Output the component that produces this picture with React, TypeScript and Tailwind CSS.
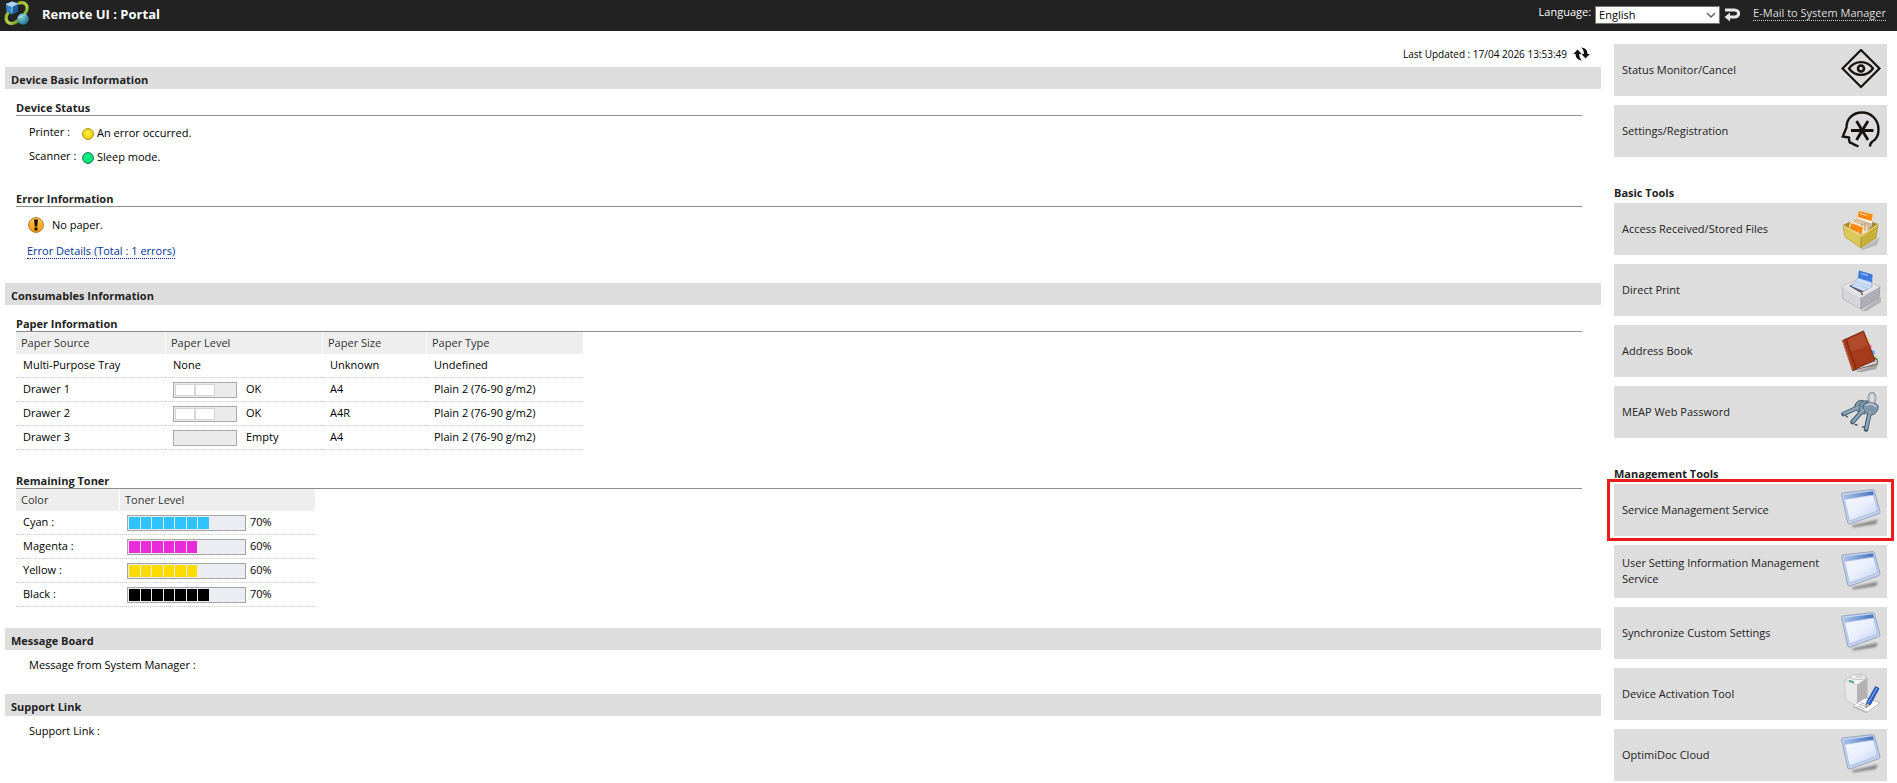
import React from 'react';

interface PaperRow {
    source: string;
    level: string;
    filled?: number;
    size: string;
    type: string;
}

interface TonerRow {
    name: string;
    percent: number;
    color: string;
}

const paperRows: PaperRow[] = [
    { source: 'Multi-Purpose Tray', level: 'None', size: 'Unknown', type: 'Undefined' },
    { source: 'Drawer 1', level: 'OK', filled: 2, size: 'A4', type: 'Plain 2 (76-90 g/m2)' },
    { source: 'Drawer 2', level: 'OK', filled: 2, size: 'A4R', type: 'Plain 2 (76-90 g/m2)' },
    { source: 'Drawer 3', level: 'Empty', filled: 0, size: 'A4', type: 'Plain 2 (76-90 g/m2)' },
];

const tonerRows: TonerRow[] = [
    { name: 'Cyan', percent: 70, color: 'bg-[#2cc3ff]' },
    { name: 'Magenta', percent: 60, color: 'bg-[#ea2ad8]' },
    { name: 'Yellow', percent: 60, color: 'bg-[#ffdc00]' },
    { name: 'Black', percent: 70, color: 'bg-black' },
];

const LogoIcon = () => (
    <svg viewBox="0 0 26 26" className="h-[26px] w-[26px]" aria-hidden="true">
        <defs>
            <linearGradient id="logoRing" x1="0" y1="0" x2="1" y2="1">
                <stop offset="0" stopColor="#8fb52a" />
                <stop offset="0.6" stopColor="#b9d243" />
                <stop offset="1" stopColor="#5f8f2c" />
            </linearGradient>
            <radialGradient id="logoBall" cx="0.35" cy="0.3" r="0.8">
                <stop offset="0" stopColor="#8fd0d8" />
                <stop offset="1" stopColor="#0f6f8c" />
            </radialGradient>
        </defs>
        <path d="M14 3.500c6-2.500 10 1 9 6-.6 3-2.500 4.500-3.500 6" fill="none" stroke="url(#logoRing)" strokeWidth="3.200" />
        <path d="M4.500 12c-3 4-3.500 9 .5 11 4 1.500 7-.5 9-2.500" fill="none" stroke="url(#logoRing)" strokeWidth="3.200" />
        <path d="M2 4l6-2.500 6 2-.3 8L8 14.500l-5.500-3z" fill="#2f86c4" />
        <path d="M2 4l6-2.500 6 2L8 6.500z" fill="#a9d6ef" />
        <path d="M8 6.500l6-3-.3 8L8 14.500z" fill="#1a5d97" />
        <path d="M2 4l6 2.500v6M8 6.500l6-3" fill="none" stroke="#d8effa" strokeWidth="0.8" />
        <circle cx="19" cy="19" r="5.800" fill="url(#logoBall)" />
        <path d="M14 18c3-1 6-3 8-3.500" fill="none" stroke="#b7e3e0" strokeWidth="1" />
    </svg>
);

const ReturnIcon = () => (
    <svg viewBox="0 0 17 15" className="h-[15px] w-[17px]" aria-hidden="true">
        <path d="M1 3h9.500c5.500 0 5.500 7 0 7H5" fill="none" stroke="#e8e8e8" strokeWidth="3" />
        <path d="M0.500 10l5.500-4.500v9z" fill="#e8e8e8" />
    </svg>
);

const RefreshIcon = () => (
    <svg viewBox="0 0 17 14" className="h-[14px] w-[17px]" aria-hidden="true">
        <path d="M4.500 2.500L8.700 7H6.200c0 2.500.6 4 2.500 6.500C4.300 12.800 2.600 10.500 2.600 7H0.300z" fill="#111" />
        <path d="M12.500 11.500L8.500 7h2.400c0-2.700-.6-4.200-2.600-6.500 4.400.4 6.200 2.900 6.200 6.500h2.400z" fill="#111" />
    </svg>
);

const StatusLamp: React.FC<{ color: 'yellow' | 'green' }> = ({ color }) => (
    <svg viewBox="0 0 12 12" className="mt-0.5 h-3 w-3" aria-hidden="true">
        <defs>
            <radialGradient id={`lamp-${color}`} cx="0.45" cy="0.4" r="0.6">
                <stop offset="0" stopColor={color === 'yellow' ? '#fff04a' : '#12f58a'} />
                <stop offset="1" stopColor={color === 'yellow' ? '#f2cf00' : '#04d873'} />
            </radialGradient>
        </defs>
        <circle cx="6" cy="6" r="5.400" fill={`url(#lamp-${color})`} stroke={color === 'yellow' ? '#a98a10' : '#157a50'} />
    </svg>
);

const WarningIcon = () => (
    <svg viewBox="0 0 16 16" className="h-4 w-4" aria-hidden="true">
        <defs>
            <linearGradient id="warn" x1="0" y1="0" x2="0" y2="1">
                <stop offset="0" stopColor="#ffc95a" />
                <stop offset="1" stopColor="#f79a06" />
            </linearGradient>
        </defs>
        <circle cx="8" cy="8" r="7.400" fill="url(#warn)" stroke="#a97a2c" />
        <path d="M6 2.500h4L9.200 9.500H6.800z" fill="#1c1400" />
        <circle cx="8" cy="12" r="1.700" fill="#1c1400" />
    </svg>
);

const EyeIcon = () => (
    <svg viewBox="0 0 40 42" fill="none" stroke="#15120f" strokeWidth="2.200" className="h-[42px] w-10" aria-hidden="true">
        <path d="M20 1L38.500 19.500 20 38 1.500 19.500z" />
        <path d="M8 19.500c6-8.500 18-8.500 24 0-6 8.500-18 8.500-24 0z" />
        <circle cx="20" cy="19.500" r="3" strokeWidth="2.600" />
    </svg>
);

const HeadIcon = () => (
    <svg viewBox="0 0 40 42" fill="none" stroke="#15120f" strokeWidth="2.400" className="h-[42px] w-10" aria-hidden="true">
        <path d="M17.500 36.500C14 35 12 34 10.500 33 8.500 33.500 8 31 8 27.500L1.800 26.500 5.500 17.500C5.500 8.500 12 2.500 21 2.500S37.500 9.500 37.500 19.500C37.500 26.500 35 29.500 31.500 31.500 30 32.500 29 34.500 29 36.500" />
        <path d="M10 20.500h22.500M15.500 11l11.500 19M27 11L15.500 30" strokeWidth="2.800" />
    </svg>
);

const FilesIcon = () => (
    <svg viewBox="0 0 40 42" className="h-[42px] w-10" aria-hidden="true">
        <path d="M20 41l19-12-3 8-14 5z" fill="#000" opacity="0.16" />
        <path d="M2 17l17-8 18 7-17 12z" fill="#a08b2e" />
        <path d="M17 2l16 4-3 13-15-5z" fill="#fbf3e4" stroke="#d8cdb8" strokeWidth="0.6" />
        <path d="M18 3l14 3.500-1.500 6.500-14-4z" fill="#ff8a12" />
        <path d="M19 5.500l7 2" stroke="#ffe0bd" />
        <path d="M9 14l5-4 16 5-3 11-9 0-10-4z" fill="#f4e6cf" />
        <path d="M13 11.500l14 5M15 10.500l13 5M12 13l13 5" stroke="#b99d72" strokeWidth="0.8" />
        <path d="M21 15v9M24 15v8M27 15v7M29 15v5" stroke="#a78659" strokeWidth="0.9" />
        <path d="M9.500 14.500l13 4.500-1.500 8-12.500-6z" fill="#ff8a12" stroke="#fff0dc" strokeWidth="0.8" />
        <path d="M2 17l18 11v12L4 29z" fill="#dcc75a" stroke="#b49b35" strokeWidth="0.7" />
        <path d="M20 28l17-12-2 14-15 10z" fill="#c9b03c" stroke="#a58d2b" strokeWidth="0.7" />
        <path d="M2.500 17.500l17.500 11 16.500-12" fill="none" stroke="#f3e596" />
    </svg>
);

const DirectPrintIcon = () => (
    <svg viewBox="0 0 40 42" className="h-[42px] w-10" aria-hidden="true">
        <path d="M20 42l20-14v5L26 42z" fill="#000" opacity="0.18" />
        <path d="M1 17l17-7 21 7-19 11z" fill="#e6e6ea" stroke="#b7b7bf" strokeWidth="0.7" />
        <path d="M8 17l11-5 13 5-12 7z" fill="#555c69" />
        <path d="M18 2l13 4-.5 12-8 4-12-5c4-3 7-8 7.500-15z" fill="#cfe0f8" stroke="#9eb4d6" strokeWidth="0.6" />
        <path d="M18 1.500l13.500 4-.4 8L17 9z" fill="#3f7be0" />
        <path d="M20 4.500l7 2" stroke="#bcd4ff" />
        <path d="M15 13l14 4M14 15.500l13 4" stroke="#a9bddb" strokeWidth="0.8" />
        <path d="M1 17l19 11v12L2 30z" fill="#d6d6da" stroke="#a9a9b1" strokeWidth="0.7" />
        <path d="M20 28l19-11-1 12-18 11z" fill="#aeaeb6" stroke="#96969e" strokeWidth="0.7" />
        <path d="M1.500 17.500L20 28.300l18.500-11" fill="none" stroke="#fafafc" />
        <circle cx="21" cy="25" r="0.900" fill="#444" />
    </svg>
);

const BookIcon = () => (
    <svg viewBox="0 0 40 42" className="h-[42px] w-10" aria-hidden="true">
        <path d="M14 42l24-9 1-3-4 9-18 4z" fill="#000" opacity="0.25" />
        <path d="M24 4l2.500 4 1 5 2.500 4 .5 5 3 6 1 4-8 2z" fill="#efe8dc" />
        <path d="M25 8l3 1.500 1 4-4-1z" fill="#f1d867" />
        <path d="M27.500 13.500l3 1.500.8 3.500-4-1z" fill="#ec8fae" />
        <path d="M30 19.500l3.500 1.500.5 3.500-4-1z" fill="#6aa6e8" />
        <path d="M32 26l4.500 2v4l-4-1z" fill="#5fc05a" />
        <path d="M12 40.500l24-6.500.5-4L33 28 12 36z" fill="#d9d9d9" stroke="#5a3a30" strokeWidth="0.8" />
        <path d="M12 38l23-7" stroke="#777" strokeWidth="0.7" />
        <path d="M1.500 10.500L22.500 1l11.500 29L11.500 40.500z" fill="#a63b1c" stroke="#6f2410" strokeWidth="0.9" />
        <path d="M7 10L22 3l5 13-18 6z" fill="#c66345" opacity="0.4" />
        <path d="M5 9l10 29.500" stroke="#74260f" strokeWidth="1" />
        <path d="M1.500 10.500l10 29.500" stroke="#d98261" strokeWidth="0.8" />
    </svg>
);

const KeysIcon = () => (
    <svg viewBox="0 0 40 42" className="h-[42px] w-10" fill="none" strokeLinecap="round" aria-hidden="true">
        <g stroke="#43586b">
            <path d="M18 16L2.500 23" strokeWidth="4.600" />
            <path d="M23 18L11.500 31" strokeWidth="4.600" />
            <path d="M29 20L25 38.500" strokeWidth="4.600" />
        </g>
        <g fill="#7f95a8" stroke="#43586b" strokeWidth="0.9">
            <path d="M14 15c0-4 5-7 9-5l3 3-4 8-4 0c-3-1-4-3-4-6z" />
            <path d="M18 17c0-5 4-8 9-7l1 8-4 5c-4 0-6-2-6-6z" />
            <path d="M22 15.500c1-4 5-5 9-4 5 1 7 3 6 6-1 4-4 6.500-7 6.500-5-1-8-4.500-8-8.500z" />
        </g>
        <g stroke="#8ea5b8">
            <path d="M17 16.500L3 22.500" strokeWidth="2.600" />
            <path d="M22 19L12 30.500" strokeWidth="2.600" />
            <path d="M29 21L25.300 37.500" strokeWidth="2.600" />
        </g>
        <path d="M25 14.500c3-2 7-1.500 10 1" stroke="#c8d5df" strokeWidth="1.400" />
        <path d="M5 25l1.500 1M14 33.500l2 .5M21.500 36h2" stroke="#43586b" strokeWidth="1.400" />
        <ellipse cx="31" cy="7" rx="3.500" ry="5.200" stroke="#7f8b96" strokeWidth="2" />
        <ellipse cx="31" cy="7" rx="3.500" ry="5.200" stroke="#e4e9ed" strokeWidth="0.600" />
    </svg>
);

const WindowIcon = () => (
    <svg viewBox="0 0 40 42" className="h-[42px] w-10" aria-hidden="true">
        <defs>
            <linearGradient id="winPane" x1="0" y1="0" x2="1" y2="1">
                <stop offset="0" stopColor="#f6f8ff" />
                <stop offset="0.5" stopColor="#e9effc" />
                <stop offset="1" stopColor="#bccdf0" />
            </linearGradient>
            <linearGradient id="winBar" x1="0" y1="0" x2="1" y2="0">
                <stop offset="0" stopColor="#a9c2ea" />
                <stop offset="1" stopColor="#4573bf" />
            </linearGradient>
            <filter id="winShade" x="-20%" y="-60%" width="140%" height="220%">
                <feGaussianBlur stdDeviation="1.200" />
            </filter>
        </defs>
        <path d="M11 36.500l26-6-2 4.500-23 3.500z" fill="#000" opacity="0.4" filter="url(#winShade)" />
        <path d="M1.500 4L31.500 0.600Q33 .5 33.400 2L39 22.500Q39.300 24 38 24.500L9 35Q7.300 35.400 6.800 34L0.600 5.500Q.5 4.200 1.500 4z" fill="#c6d4ec" stroke="#8397b9" strokeWidth="0.8" />
        <path d="M2.300 6L32 2.300l.8 3.400L3.300 10.300z" fill="url(#winBar)" />
        <path d="M3.500 10.500L32.500 6l4.300 16L8.500 32z" fill="url(#winPane)" stroke="#93abd6" strokeWidth="0.600" />
    </svg>
);

const ActivationIcon = () => (
    <svg viewBox="0 0 40 42" className="h-[42px] w-10" aria-hidden="true">
        <path d="M4 7l12-5 10 3v22l-9 6L5 27z" fill="#dededf" stroke="#a8a8aa" strokeWidth="0.7" />
        <path d="M4 7l12 5v20.500L5 27z" fill="#e9e9ea" />
        <path d="M16 12l10-7v22l-10 6z" fill="#b3b3b6" />
        <path d="M4 7l11-5.500L26 5l-10 7z" fill="#f5f5f5" stroke="#bababa" strokeWidth="0.6" />
        <ellipse cx="17" cy="4" rx="8" ry="2.600" fill="#f2f2f2" stroke="#b9b9b9" strokeWidth="0.8" />
        <ellipse cx="18" cy="3.500" rx="4" ry="1.200" fill="#d2d2d2" />
        <path d="M8 7.500l5 2" stroke="#2f9c86" strokeWidth="1.500" />
        <path d="M12 33l12-8 15 5-13 9z" fill="#fff" stroke="#adadad" strokeWidth="0.7" />
        <path d="M12 33l14 6v1.500l-14-6z" fill="#b8b8b8" />
        <path d="M18 31l8 3M20 29.500l6 2.500M16.500 33l7 3" stroke="#999" strokeWidth="0.8" />
        <path d="M34.500 13.500l3.500 2-8.500 16-4.500 3 .8-5.300z" fill="#2f68cf" stroke="#173d8c" strokeWidth="0.8" />
        <path d="M36 15l-9 15" stroke="#8fb4f5" strokeWidth="0.9" />
        <path d="M25 34.800l.7-4.500 3.300 1.900z" fill="#e5b98a" />
    </svg>
);

interface ToolButtonProps {
    label: string;
    icon: React.ReactNode;
    highlighted?: boolean;
}

const ToolButton: React.FC<ToolButtonProps> = ({ label, icon, highlighted = false }) => (
    <div className="relative">
        <button
            type="button"
            className="flex min-h-[52px] w-full cursor-pointer items-center justify-between bg-[#ddd] pr-1.5 pl-2 text-left leading-4 text-[#222]"
        >
            <span className="max-w-[210px] pt-2.5 pb-[11px]">{label}</span>
            <span className="shrink-0">{icon}</span>
        </button>
        {highlighted && (
            <div className="pointer-events-none absolute -inset-x-[7px] -inset-y-[5px] border-3 border-[#ea1c1c]" />
        )}
    </div>
);

const SectionBar: React.FC<{ children: React.ReactNode }> = ({ children }) => (
    <h2 className="bg-[#ddd] pt-1 pl-1.5 leading-[18px] font-bold text-[#222]">{children}</h2>
);

const SubHeading: React.FC<{ children: React.ReactNode }> = ({ children }) => (
    <h3 className="border-b border-[#8e8e8e] leading-[15px] font-bold text-[#222]">{children}</h3>
);

const PaperGauge: React.FC<{ filled: number }> = ({ filled }) => (
    <div className="flex h-4 w-16 border border-[#aaa] bg-[#ebebeb] p-px">
        {Array.from({ length: filled }, (_, i) => (
            <div key={i} className="h-full w-1/3 border border-[#d5d5d5] bg-white" />
        ))}
    </div>
);

const TonerGauge: React.FC<{ percent: number; color: string }> = ({ percent, color }) => (
    <div className="flex h-4 w-[119px] border border-[#a5a5a8] bg-[#ecedf2] p-px">
        {Array.from({ length: percent / 10 }, (_, i) => (
            <div key={i} className="h-full w-[10%] pr-px">
                <div className={`h-full ${color}`} />
            </div>
        ))}
    </div>
);

const headCell = 'border-r border-white bg-[#eee] pl-[5px] text-left font-normal text-[#333] last:border-r-0';
const bodyCell = 'border-b border-dotted border-[#ccc] pl-[7px]';

export default function App() {
    return (
        <div className="bg-white font-['Open_Sans','Noto_Sans',sans-serif] text-[11px] text-black">
            <header className="flex h-[31px] justify-between bg-[#222] pr-[11px] pl-1 text-white">
                <div className="flex items-start gap-3">
                    <LogoIcon />
                    <h1 className="text-[13px] leading-7 font-bold">Remote UI : Portal</h1>
                </div>
                <div className="flex items-center pb-1.5">
                    <label htmlFor="language" className="mr-1">Language:</label>
                    <div className="relative mt-1">
                        <select
                            id="language"
                            defaultValue="English"
                            className="block h-[18px] w-[125px] appearance-none border border-[#767676] bg-white pl-[3px] leading-4 text-black"
                        >
                            <option>English</option>
                        </select>
                        <svg viewBox="0 0 10 6" className="pointer-events-none absolute top-1.5 right-1 h-1.5 w-2.5" aria-hidden="true">
                            <path d="M1 1l4 4 4-4" fill="none" stroke="#666" strokeWidth="1.500" />
                        </svg>
                    </div>
                    <button type="button" aria-label="Apply language" className="mt-1 ml-1 cursor-pointer">
                        <ReturnIcon />
                    </button>
                    <a href="#mail" className="ml-3 border-b border-dotted border-[#ccc] leading-[15px] text-[#ddd]">
                        E-Mail to System Manager
                    </a>
                </div>
            </header>

            <div className="flex items-start gap-[13px] pr-2.5 pl-[5px]">
                <main className="min-w-0 grow">
                    <div className="flex h-9 items-center justify-end gap-1.5 pt-2.5 pr-[11px]">
                        <span className="text-[10px]">Last Updated : 17/04 2026 13:53:49</span>
                        <button type="button" aria-label="Refresh" className="cursor-pointer">
                            <RefreshIcon />
                        </button>
                    </div>

                    <SectionBar>Device Basic Information</SectionBar>
                    <div className="mr-[19px] ml-[11px] pt-[11px] pb-6">
                        <SubHeading>Device Status</SubHeading>
                        <dl className="mb-[23px] grid grid-cols-[53px_1fr] pt-1 pl-[13px] leading-6">
                            <dt>Printer :</dt>
                            <dd className="flex items-center gap-[3px] pt-0.5 leading-[22px]">
                                <StatusLamp color="yellow" />
                                An error occurred.
                            </dd>
                            <dt>Scanner :</dt>
                            <dd className="flex items-center gap-[3px] pt-0.5 leading-[22px]">
                                <StatusLamp color="green" />
                                Sleep mode.
                            </dd>
                        </dl>
                        <SubHeading>Error Information</SubHeading>
                        <div className="flex items-center gap-2 pt-1.5 pl-3 leading-6">
                            <WarningIcon />
                            <span>No paper.</span>
                        </div>
                        <div className="flex pt-1.5 pl-[11px]">
                            <a href="#errors" className="border-b border-dotted border-[#003399] leading-[15px] text-[#003399]">
                                Error Details (Total : 1 errors)
                            </a>
                        </div>
                    </div>

                    <SectionBar>Consumables Information</SectionBar>
                    <div className="mr-[19px] ml-[11px] pt-[11px] pb-[21px]">
                        <SubHeading>Paper Information</SubHeading>
                        <table className="mb-[23px] w-[567px] table-fixed border-separate border-spacing-0">
                            <colgroup>
                                <col className="w-[150px]" />
                                <col className="w-[157px]" />
                                <col className="w-[104px]" />
                                <col />
                            </colgroup>
                            <thead>
                                <tr className="h-[22px]">
                                    <th className={headCell}>Paper Source</th>
                                    <th className={headCell}>Paper Level</th>
                                    <th className={headCell}>Paper Size</th>
                                    <th className={headCell}>Paper Type</th>
                                </tr>
                            </thead>
                            <tbody>
                                {paperRows.map((row) => (
                                    <tr key={row.source} className="h-6">
                                        <td className={bodyCell}>{row.source}</td>
                                        <td className={bodyCell}>
                                            {row.filled === undefined ? (
                                                row.level
                                            ) : (
                                                <div className="flex items-center gap-[9px]">
                                                    <PaperGauge filled={row.filled} />
                                                    {row.level}
                                                </div>
                                            )}
                                        </td>
                                        <td className={bodyCell}>{row.size}</td>
                                        <td className={bodyCell}>{row.type}</td>
                                    </tr>
                                ))}
                            </tbody>
                        </table>

                        <SubHeading>Remaining Toner</SubHeading>
                        <table className="w-[299px] table-fixed border-separate border-spacing-0">
                            <colgroup>
                                <col className="w-[104px]" />
                                <col />
                            </colgroup>
                            <thead>
                                <tr className="h-[22px]">
                                    <th className={headCell}>Color</th>
                                    <th className={headCell}>Toner Level</th>
                                </tr>
                            </thead>
                            <tbody>
                                {tonerRows.map((row) => (
                                    <tr key={row.name} className="h-6">
                                        <td className={bodyCell}>{row.name} :</td>
                                        <td className={bodyCell}>
                                            <div className="flex items-center gap-1">
                                                <TonerGauge percent={row.percent} color={row.color} />
                                                {row.percent}%
                                            </div>
                                        </td>
                                    </tr>
                                ))}
                            </tbody>
                        </table>
                    </div>

                    <SectionBar>Message Board</SectionBar>
                    <p className="pt-[7px] pb-[21px] pl-6 leading-4">Message from System Manager :</p>

                    <SectionBar>Support Link</SectionBar>
                    <p className="pt-[7px] pl-6 leading-4">Support Link :</p>
                </main>

                <aside className="w-[273px] shrink-0 pt-[13px]">
                    <div className="flex flex-col gap-[9px]">
                        <ToolButton label="Status Monitor/Cancel" icon={<EyeIcon />} />
                        <ToolButton label="Settings/Registration" icon={<HeadIcon />} />
                    </div>
                    <h2 className="mt-7 mb-0.5 leading-4 font-bold text-[#222]">Basic Tools</h2>
                    <div className="flex flex-col gap-[9px]">
                        <ToolButton label="Access Received/Stored Files" icon={<FilesIcon />} />
                        <ToolButton label="Direct Print" icon={<DirectPrintIcon />} />
                        <ToolButton label="Address Book" icon={<BookIcon />} />
                        <ToolButton label="MEAP Web Password" icon={<KeysIcon />} />
                    </div>
                    <h2 className="mt-7 mb-0.5 leading-4 font-bold text-[#222]">Management Tools</h2>
                    <div className="flex flex-col gap-[9px]">
                        <ToolButton label="Service Management Service" icon={<WindowIcon />} highlighted />
                        <ToolButton label="User Setting Information Management Service" icon={<WindowIcon />} />
                        <ToolButton label="Synchronize Custom Settings" icon={<WindowIcon />} />
                        <ToolButton label="Device Activation Tool" icon={<ActivationIcon />} />
                        <ToolButton label="OptimiDoc Cloud" icon={<WindowIcon />} />
                    </div>
                </aside>
            </div>
        </div>
    );
}
